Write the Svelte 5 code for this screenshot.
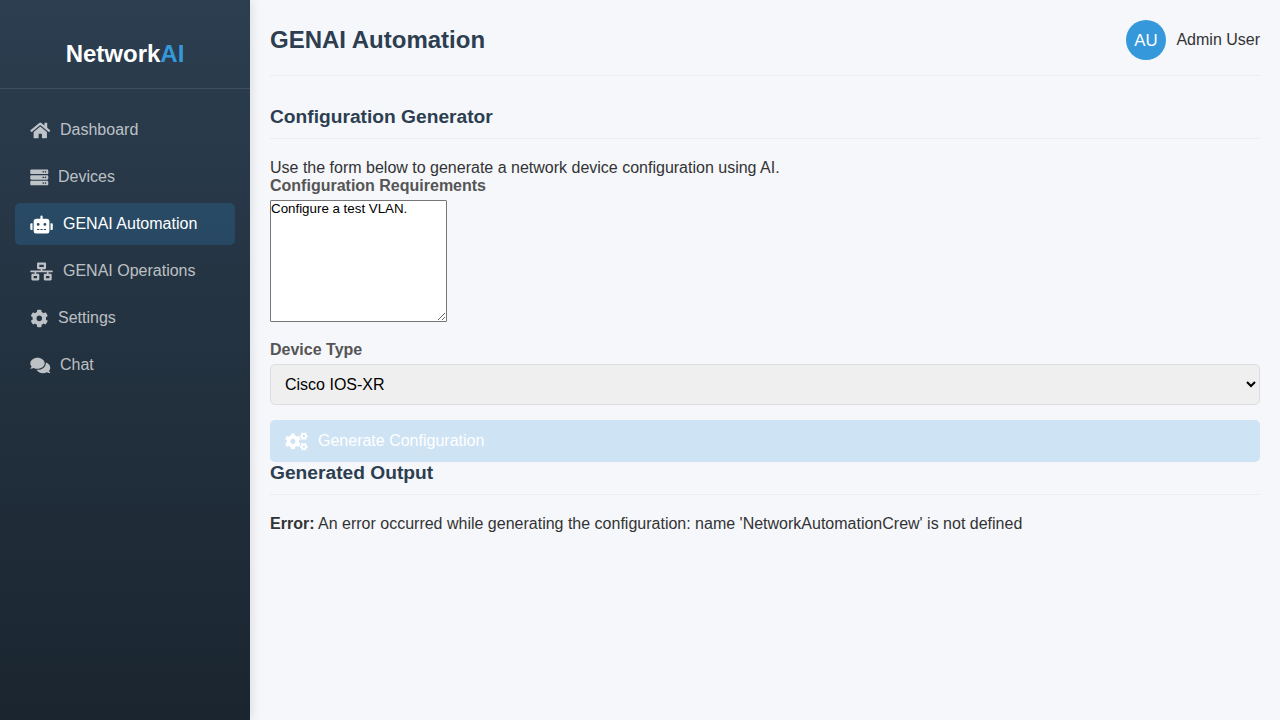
<script>
  const cog = 'M487.4 315.7l-42.6-24.6c4.3-23.2 4.3-47 0-70.2l42.6-24.6c4.9-2.8 7.1-8.6 5.5-14-11.1-35.6-30-67.8-54.7-94.6-3.8-4.1-10-5.1-14.8-2.3L380.8 110c-17.9-15.4-38.5-27.3-60.8-35.1V25.8c0-5.6-3.9-10.5-9.4-11.7-36.7-8.2-74.3-7.8-109.2 0-5.5 1.2-9.4 6.1-9.4 11.7V75c-22.2 7.9-42.8 19.8-60.8 35.1L88.7 85.5c-4.9-2.8-11-1.9-14.8 2.3-24.7 26.7-43.6 58.9-54.7 94.6-1.7 5.4.6 11.2 5.5 14L67.3 221c-4.3 23.2-4.3 47 0 70.2l-42.6 24.6c-4.9 2.8-7.1 8.6-5.5 14 11.1 35.6 30 67.8 54.7 94.6 3.8 4.1 10 5.1 14.8 2.3l42.6-24.6c17.9 15.4 38.5 27.3 60.8 35.1v49.2c0 5.6 3.9 10.5 9.4 11.7 36.7 8.2 74.3 7.8 109.2 0 5.5-1.2 9.4-6.1 9.4-11.7v-49.2c22.2-7.9 42.8-19.8 60.8-35.1l42.6 24.6c4.9 2.8 11 1.9 14.8-2.3 24.7-26.7 43.6-58.9 54.7-94.6 1.5-5.5-.7-11.3-5.6-14.1zM256 336c-44.1 0-80-35.9-80-80s35.9-80 80-80 80 35.9 80 80-35.9 80-80 80z';
  const rack = 'M480 160H32c-17.673 0-32-14.327-32-32V64c0-17.673 14.327-32 32-32h448c17.673 0 32 14.327 32 32v64c0 17.673-14.327 32-32 32zm-48-88c-13.255 0-24 10.745-24 24s10.745 24 24 24 24-10.745 24-24-10.745-24-24-24zm-64 0c-13.255 0-24 10.745-24 24s10.745 24 24 24 24-10.745 24-24-10.745-24-24-24z';
  const smallGear = 'M512.1 191l-8.2 14.3c-3 5.3-9.4 7.5-15.1 5.4-11.8-4.4-22.6-10.7-32.1-18.6-4.6-3.8-5.8-10.5-2.8-15.7l8.2-14.3c-6.9-8-12.3-17.3-15.9-27.4h-16.5c-6 0-11.2-4.3-12.2-10.3-2-12-2.1-24.6 0-37.1 1-6 6.2-10.4 12.2-10.4h16.5c3.6-10.1 9-19.4 15.9-27.4l-8.2-14.3c-3-5.2-1.9-11.9 2.8-15.7 9.5-7.9 20.4-14.2 32.1-18.6 5.7-2.1 12.1.1 15.1 5.4l8.2 14.3c10.5-1.9 21.2-1.9 31.7 0L552 6.3c3-5.3 9.4-7.5 15.1-5.4 11.8 4.4 22.6 10.7 32.1 18.6 4.6 3.8 5.8 10.5 2.8 15.7l-8.2 14.3c6.9 8 12.3 17.3 15.9 27.4h16.5c6 0 11.2 4.3 12.2 10.3 2 12 2.1 24.6 0 37.1-1 6-6.2 10.4-12.2 10.4h-16.5c-3.6 10.1-9 19.4-15.9 27.4l8.2 14.3c3 5.2 1.9 11.9-2.8 15.7-9.5 7.9-20.4 14.2-32.1 18.6-5.7 2.1-12.1-.1-15.1-5.4l-8.2-14.3c-10.4 1.9-21.2 1.9-31.7 0zm-10.5-58.8c38.5 29.6 82.4-14.3 52.8-52.8-38.5-29.7-82.4 14.3-52.8 52.8z';
  const bigGear = 'M386.3 286.1l33.7 16.8c10.1 5.8 14.5 18.1 10.5 29.1-8.9 24.2-26.4 46.4-42.6 65.8-7.4 8.9-20.2 11.1-30.3 5.3l-29.1-16.8c-16 13.7-34.6 24.6-54.9 31.7v33.6c0 11.6-8.3 21.6-19.7 23.6-24.6 4.2-50.4 4.4-75.9 0-11.5-2-20-11.9-20-23.6V418c-20.3-7.2-38.9-18-54.9-31.7L74 403c-10 5.8-22.9 3.6-30.3-5.3-16.2-19.4-33.3-41.6-42.2-65.7-4-10.9.4-23.2 10.5-29.1l33.3-16.8c-3.9-20.9-3.9-42.4 0-63.4L12 205.8c-10.1-5.8-14.6-18.1-10.5-29 8.9-24.2 26-46.4 42.2-65.8 7.4-8.9 20.2-11.1 30.3-5.3l29.1 16.8c16-13.7 34.6-24.6 54.9-31.7V57.1c0-11.5 8.2-21.5 19.6-23.5 24.6-4.2 50.5-4.4 76-.1 11.5 2 20 11.9 20 23.6v33.6c20.3 7.2 38.9 18 54.9 31.7l29.1-16.8c10-5.8 22.9-3.6 30.3 5.3 16.2 19.4 33.2 41.6 42.1 65.8 4 10.9.1 23.2-10 29.1l-33.7 16.8c3.9 21 3.9 42.5 0 63.5zm-117.6 21.1c59.2-77-28.7-164.9-105.7-105.7-59.2 77 28.7 164.9 105.7 105.7z';

  // Each icon is a view width (height is always 512) and a list of [path, vertical offset].
  const nav = [
    { label: 'Dashboard', width: 576, shapes: [['M280.37 148.26L96 300.11V464a16 16 0 0 0 16 16l112.06-.29a16 16 0 0 0 15.92-16V368a16 16 0 0 1 16-16h64a16 16 0 0 1 16 16v95.64a16 16 0 0 0 16 16.05L464 480a16 16 0 0 0 16-16V300L295.67 148.26a12.19 12.19 0 0 0-15.3 0zM571.6 251.47L488 182.56V44.05a12 12 0 0 0-12-12h-56a12 12 0 0 0-12 12v72.61L318.47 43a48 48 0 0 0-61 0L4.34 251.47a12 12 0 0 0-1.6 16.9l25.5 31A12 12 0 0 0 45.15 301l235.22-193.74a12.19 12.19 0 0 1 15.3 0L530.9 301a12 12 0 0 0 16.9-1.6l25.5-31a12 12 0 0 0-1.7-16.93z', 0]] },
    { label: 'Devices', width: 512, shapes: [[rack, 0], [rack, 160], [rack, 320]] },
    { label: 'GENAI Automation', width: 640, active: true, shapes: [['M32,224H64V416H32A31.96166,31.96166,0,0,1,0,384V256A31.96166,31.96166,0,0,1,32,224Zm512-48V448a64.06328,64.06328,0,0,1-64,64H160a64.06328,64.06328,0,0,1-64-64V176a79.974,79.974,0,0,1,80-80H288V32a32,32,0,0,1,64,0V96H464A79.974,79.974,0,0,1,544,176ZM264,256a40,40,0,1,0-40,40A39.997,39.997,0,0,0,264,256Zm-8,128H192v32h64Zm96,0H288v32h64ZM456,256a40,40,0,1,0-40,40A39.997,39.997,0,0,0,456,256Zm-8,128H384v32h64ZM640,256V384a31.96166,31.96166,0,0,1-32,32H576V224h32A31.96166,31.96166,0,0,1,640,256Z', 0]] },
    { label: 'GENAI Operations', width: 640, shapes: [['M640 264v-16c0-8.84-7.16-16-16-16H344v-40h72c17.67 0 32-14.33 32-32V32c0-17.67-14.33-32-32-32H224c-17.67 0-32 14.33-32 32v128c0 17.67 14.33 32 32 32h72v40H16c-8.84 0-16 7.16-16 16v16c0 8.84 7.16 16 16 16h104v40H64c-17.67 0-32 14.33-32 32v128c0 17.67 14.33 32 32 32h160c17.67 0 32-14.33 32-32V352c0-17.67-14.33-32-32-32h-56v-40h304v40h-56c-17.67 0-32 14.33-32 32v128c0 17.67 14.33 32 32 32h160c17.67 0 32-14.33 32-32V352c0-17.67-14.33-32-32-32h-56v-40h104c8.84 0 16-7.16 16-16zM256 128V64h128v64H256zm-64 320H96v-64h96v64zm352 0h-96v-64h96v64z', 0]] },
    { label: 'Settings', width: 512, shapes: [[cog, 0]] },
    { label: 'Chat', width: 576, shapes: [['M416 192c0-88.4-93.1-160-208-160S0 103.6 0 192c0 34.3 14.1 65.9 38 92-13.4 30.2-35.5 54.2-35.8 54.5-2.2 2.3-2.8 5.7-1.5 8.7S4.8 352 8 352c36.6 0 66.9-12.3 88.7-25 32.2 15.7 70.3 25 111.3 25 114.9 0 208-71.6 208-160zm122 220c23.9-26 38-57.7 38-92 0-66.9-53.5-124.2-129.3-148.1.9 6.6 1.3 13.3 1.3 20.1 0 105.9-107.7 192-240 192-10.8 0-21.3-.8-31.7-1.9C207.8 439.6 281.8 480 368 480c41 0 79.1-9.2 111.3-25 21.8 12.7 52.1 25 88.7 25 3.2 0 6.1-1.9 7.3-4.8 1.3-2.9.7-6.3-1.5-8.7-.3-.3-22.4-24.2-35.8-54.5z', 0]] }
  ];
  const gears = [[smallGear, 0], [bigGear, 0], [smallGear, 298.9]];

  let requirements = $state('Configure a test VLAN.');
</script>

{#snippet icon(width, shapes)}
  <svg class="icon" viewBox="0 0 {width} 512" preserveAspectRatio="xMinYMid meet" width={Math.round((width / 512) * 18)} height="18" aria-hidden="true">
    {#each shapes as [d, dy]}
      <path {d} transform="translate(8 {dy + 12})" />
    {/each}
  </svg>
{/snippet}

<div class="layout">
  <aside class="sidebar">
    <div class="brand">Network<span>AI</span></div>
    <nav>
      {#each nav as item}
        <a href="#top" class="item" class:active={item.active}>
          {@render icon(item.width, item.shapes)}
          <span>{item.label}</span>
        </a>
      {/each}
    </nav>
  </aside>

  <main>
    <header>
      <h1>GENAI Automation</h1>
      <div class="user">
        <svg class="avatar" viewBox="0 0 40 40" width="40" height="40">
          <circle cx="20" cy="20" r="20" />
          <text x="20" y="26" text-anchor="middle">AU</text>
        </svg>
        <span>Admin User</span>
      </div>
    </header>

    <h2>Configuration Generator</h2>
    <p>Use the form below to generate a network device configuration using AI.</p>
    <form>
      <label for="requirements">Configuration Requirements</label>
      <textarea id="requirements" spellcheck="false" bind:value={requirements}></textarea>
      <label for="device">Device Type</label>
      <select id="device">
        <option>Cisco IOS-XR</option>
      </select>
      <button type="button">
        {@render icon(640, gears)}
        <span>Generate Configuration</span>
      </button>
    </form>

    <h2>Generated Output</h2>
    <p><strong>Error:</strong> An error occurred while generating the configuration: name 'NetworkAutomationCrew' is not defined</p>
  </main>
</div>

<style>
  :global(body) {
    margin: 0;
    background: #f5f7fb;
  }
  .layout, .layout * {
    box-sizing: border-box;
    font-family: "Liberation Sans", Arial, sans-serif;
  }
  .layout {
    display: flex;
    height: 720px;
    overflow: hidden;
    font-size: 16px;
    line-height: 18px;
    color: #333;
    background: #f5f7fb;
  }
  .sidebar {
    flex: 0 0 250px;
    padding-top: 20px;
    background: linear-gradient(180deg, #2c3e50 0%, #1a252f 100%);
    box-shadow: 2px 0 10px rgba(0, 0, 0, 0.1);
  }
  .brand {
    height: 69px;
    padding-top: 20px;
    border-bottom: 1px solid rgba(255, 255, 255, 0.1);
    text-align: center;
    font-size: 24px;
    line-height: 27px;
    font-weight: bold;
    color: #fff;
  }
  .brand span {
    color: #3498db;
  }
  nav {
    display: flex;
    flex-direction: column;
    gap: 5px;
    padding: 20px 15px;
  }
  .item, button {
    display: flex;
    align-items: center;
    gap: 10px;
    height: 42px;
    padding: 12px 15px;
    border-radius: 5px;
  }
  .item {
    color: rgba(255, 255, 255, 0.7);
    text-decoration: none;
  }
  .item.active {
    color: #fff;
    background: rgba(52, 152, 219, 0.2);
  }
  .icon {
    flex: none;
    display: block;
    overflow: visible;
    fill: currentColor;
  }
  main {
    flex: 1;
    min-width: 0;
    padding: 20px;
  }
  header {
    display: flex;
    justify-content: space-between;
    align-items: center;
    height: 56px;
    padding-bottom: 15px;
    margin-bottom: 30px;
    border-bottom: 1px solid #eaedf2;
  }
  h1 {
    margin: 0;
    font-size: 24px;
    line-height: 26px;
    color: #2c3e50;
  }
  .user {
    display: flex;
    align-items: center;
    gap: 10px;
  }
  .avatar {
    display: block;
    fill: #3498db;
  }
  .avatar text {
    fill: #fff;
    font-size: 16.8px;
  }
  h2 {
    height: 33px;
    margin: 0 0 20px;
    border-bottom: 1px solid #eaedf2;
    font-size: 19.2px;
    line-height: 22px;
    color: #2c3e50;
  }
  p {
    margin: 0;
  }
  form {
    display: flex;
    flex-direction: column;
  }
  label {
    margin-bottom: 5px;
    font-weight: bold;
    color: #555;
  }
  textarea {
    width: 177px;
    height: 122px;
    margin: 0 0 19px;
    padding: 0;
    border: 1px solid #767676;
    border-radius: 1px;
    font-size: 13.333px;
    line-height: 15px;
    color: #000;
    background: #fff;
  }
  select {
    height: 41px;
    margin-bottom: 15px;
    padding: 10px;
    border: 1px solid #ddd;
    border-radius: 5px;
    font-size: 16px;
    color: #000;
    background-color: #efefef;
  }
  button {
    border: 0;
    font-size: 16px;
    line-height: 18px;
    color: #fff;
    background: rgba(52, 152, 219, 0.2);
  }
</style>
